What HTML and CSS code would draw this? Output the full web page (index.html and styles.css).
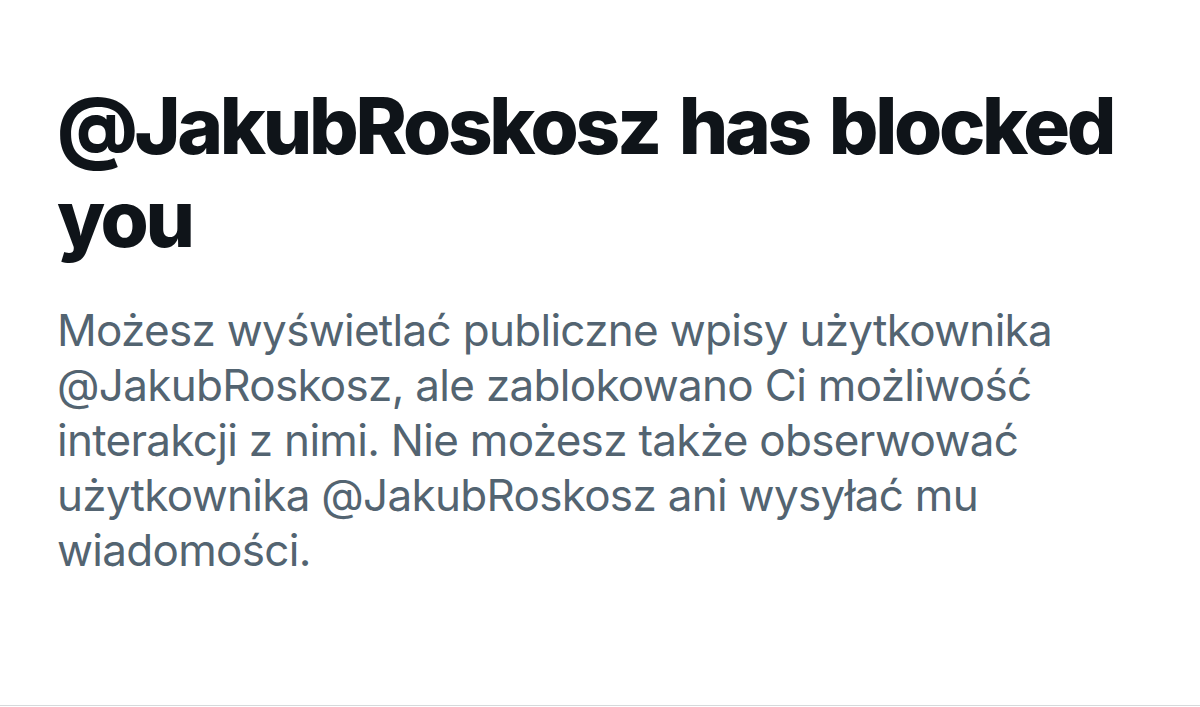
FILE: index.html
```html
<!DOCTYPE html>
<html lang="pl">
<head>
    <meta charset="UTF-8">
    <meta name="viewport" content="width=device-width, initial-scale=1.0">
    <title>@JakubRoskosz has blocked you</title>
    <link rel="stylesheet" href="styles.css">
</head>
<body>
    <main class="blocked">
        <h1 class="blocked-title">@JakubRoskosz has blocked you</h1>
        <p class="blocked-text">Możesz wyświetlać publiczne wpisy użytkownika @JakubRoskosz, ale zablokowano Ci możliwość interakcji z nimi. Nie możesz także obserwować użytkownika @JakubRoskosz ani wysyłać mu wiadomości.</p>
    </main>
</body>
</html>
```

FILE: styles.css
```css
* {
    margin: 0;
    padding: 0;
    box-sizing: border-box;
}

body {
    background: #fff;
    height: 100vh;
    overflow: hidden;
    font-family: Inter, "Noto Sans", sans-serif;
}

.blocked {
    height: 706px;
    padding: 79px 40px 0 57px;
    border-bottom: 1px solid #d6d9db;
}

.blocked-title {
    font-size: 78px;
    line-height: 93px;
    font-weight: 800;
    color: #0f1419;
    letter-spacing: -3.3px;
    word-spacing: 6px;
    max-width: 1100px;
}

.blocked-text {
    margin-top: 38px;
    font-size: 44px;
    line-height: 55px;
    font-weight: 400;
    color: #536471;
    letter-spacing: -0.7px;
    max-width: 1060px;
}
```
